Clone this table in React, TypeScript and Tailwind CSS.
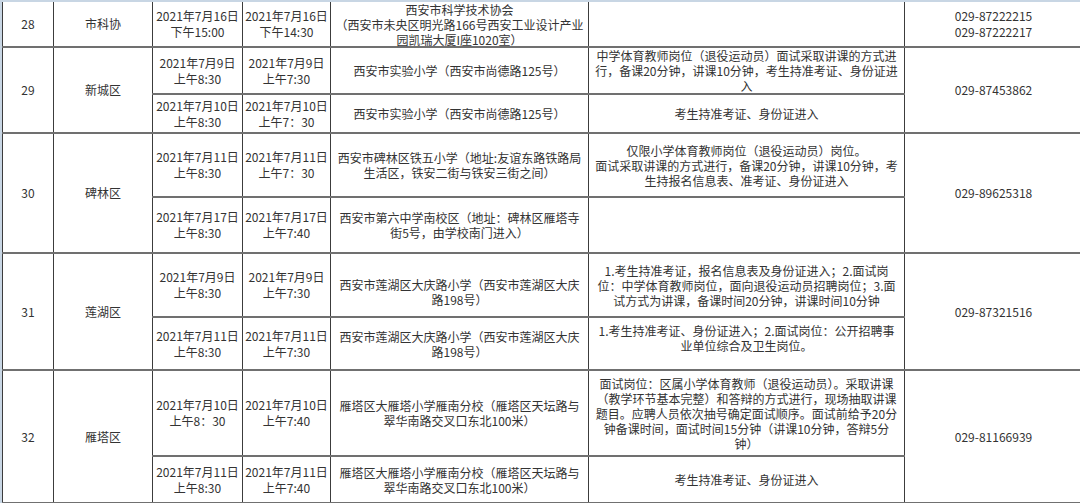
import React from "react";

type L = string[];

const B = "border-x border-x-[#3c3c3c] border-y-2 border-y-[#707070] p-0 text-center align-middle";

function Lines({ lines, lh = "leading-[15px]" }: { lines: L; lh?: string }) {
  return (
    <div className={lh}>
      {lines.map((l, i) => (
        <div key={i} className="whitespace-nowrap">
          {l || "\u00a0"}
        </div>
      ))}
    </div>
  );
}

function Fixed({ h, children }: { h: string; children: React.ReactNode }) {
  return <div className={h + " flex flex-col justify-center items-center overflow-visible"}>{children}</div>;
}

function DateCell({ d, t }: { d: string; t: string }) {
  return (
    <td className={B}>
      <Lines lines={[d, t]} lh="leading-[16px]" />
    </td>
  );
}

export default function App() {
  return (
    <div className="w-[1080px] h-[503px] overflow-hidden bg-white border-t-2 border-l-2 border-[#c8d6e4] font-['Noto_Sans_CJK_SC','Liberation_Sans',sans-serif] text-[12px] text-[#333]">
      <table className="table-fixed border-collapse w-[1080px] -mt-[2px]">
        <colgroup>
          <col className="w-[51px]" />
          <col className="w-[99px]" />
          <col className="w-[90px]" />
          <col className="w-[88px]" />
          <col className="w-[258px]" />
          <col className="w-[316px]" />
          <col className="w-[178px]" />
        </colgroup>
        <tbody>
          {/* 28 */}
          <tr className="h-[46px]">
            <td className={B + " border-t-0"}>28</td>
            <td className={B + " border-t-0"}>市科协</td>
            <DateCell d="2021年7月16日" t="下午15:00" />
            <DateCell d="2021年7月16日" t="下午14:30" />
            <td className={B}>
              <Fixed h="h-[44px]">
                <Lines lines={["西安市科学技术协会", "（西安市未央区明光路166号西安工业设计产业", "园凯瑞大厦I座1020室）"]} />
              </Fixed>
            </td>
            <td className={B}></td>
            <td className={B}>
              <Lines lines={["029-87222215", "029-87222217"]} lh="leading-[16px]" />
            </td>
          </tr>
          {/* 29 */}
          <tr className="h-[47px]">
            <td className={B} rowSpan={2}>29</td>
            <td className={B} rowSpan={2}>新城区</td>
            <DateCell d="2021年7月9日" t="上午8:30" />
            <DateCell d="2021年7月9日" t="上午7:30" />
            <td className={B}>西安市实验小学（西安市尚德路125号）</td>
            <td className={B}>
              <Lines
                lines={[
                  "中学体育教师岗位（退役运动员）面试采取讲课的方式进",
                  "行，备课20分钟，讲课10分钟，考生持准考证、身份证进",
                  "入",
                ]}
              />
            </td>
            <td className={B} rowSpan={2}>029-87453862</td>
          </tr>
          <tr className="h-[39px]">
            <DateCell d="2021年7月10日" t="上午8:30" />
            <DateCell d="2021年7月10日" t="上午7：30" />
            <td className={B}>西安市实验小学（西安市尚德路125号）</td>
            <td className={B}>考生持准考证、身份证进入</td>
          </tr>
          {/* 30 */}
          <tr className="h-[64px]">
            <td className={B} rowSpan={2}>30</td>
            <td className={B} rowSpan={2}>碑林区</td>
            <DateCell d="2021年7月11日" t="上午8:30" />
            <DateCell d="2021年7月11日" t="上午7：30" />
            <td className={B}>
              <Lines lines={["西安市碑林区铁五小学（地址:友谊东路铁路局", "生活区，铁安二街与铁安三街之间）"]} />
            </td>
            <td className={B}>
              <Lines
                lines={[
                  "仅限小学体育教师岗位（退役运动员）岗位。",
                  "面试采取讲课的方式进行，备课20分钟，讲课10分钟，考",
                  "生持报名信息表、准考证、身份证进入",
                ]}
              />
            </td>
            <td className={B} rowSpan={2}>029-89625318</td>
          </tr>
          <tr className="h-[56px]">
            <DateCell d="2021年7月17日" t="上午8:30" />
            <DateCell d="2021年7月17日" t="上午7:40" />
            <td className={B}>
              <Lines lines={["西安市第六中学南校区（地址：碑林区雁塔寺", "街5号，由学校南门进入）"]} />
            </td>
            <td className={B}></td>
          </tr>
          {/* 31 */}
          <tr className="h-[64px]">
            <td className={B} rowSpan={2}>31</td>
            <td className={B} rowSpan={2}>莲湖区</td>
            <DateCell d="2021年7月9日" t="上午8:30" />
            <DateCell d="2021年7月9日" t="上午7:30" />
            <td className={B}>
              <div className="pt-[14px]">
                <Lines lines={["西安市莲湖区大庆路小学（西安市莲湖区大庆", "路198号）"]} />
              </div>
            </td>
            <td className={B}>
              <Lines
                lines={[
                  "1.考生持准考证，报名信息表及身份证进入；2.面试岗",
                  "位：中学体育教师岗位，面向退役运动员招聘岗位；3.面",
                  "试方式为讲课，备课时间20分钟，讲课时间10分钟",
                ]}
              />
            </td>
            <td className={B} rowSpan={2}>029-87321516</td>
          </tr>
          <tr className="h-[53px]">
            <DateCell d="2021年7月11日" t="上午8:30" />
            <DateCell d="2021年7月11日" t="上午7:30" />
            <td className={B}>
              <Lines lines={["西安市莲湖区大庆路小学（西安市莲湖区大庆", "路198号）"]} />
            </td>
            <td className={B}>
              <div className="pb-[12px]">
                <Lines lines={["1.考生持准考证、身份证进入；2.面试岗位：公开招聘事", "业单位综合及卫生岗位。"]} />
              </div>
            </td>
          </tr>
          {/* 32 */}
          <tr className="h-[86px]">
            <td className={B} rowSpan={2}>32</td>
            <td className={B} rowSpan={2}>雁塔区</td>
            <DateCell d="2021年7月10日" t="上午8：30" />
            <DateCell d="2021年7月10日" t="上午7:40" />
            <td className={B}>
              <Lines lines={["雁塔区大雁塔小学雁南分校（雁塔区天坛路与", "翠华南路交叉口东北100米）"]} />
            </td>
            <td className={B}>
              <Lines
                lines={[
                  "面试岗位：区属小学体育教师（退役运动员）。采取讲课",
                  "（教学环节基本完整）和答辩的方式进行，现场抽取讲课",
                  "题目。应聘人员依次抽号确定面试顺序。面试前给予20分",
                  "钟备课时间，面试时间15分钟（讲课10分钟，答辩5分",
                  "钟）",
                ]}
              />
            </td>
            <td className={B} rowSpan={2}>029-81166939</td>
          </tr>
          <tr className="h-[47px]">
            <DateCell d="2021年7月11日" t="上午8:30" />
            <DateCell d="2021年7月11日" t="上午7:40" />
            <td className={B}>
              <Lines lines={["雁塔区大雁塔小学雁南分校（雁塔区天坛路与", "翠华南路交叉口东北100米）"]} />
            </td>
            <td className={B}>考生持准考证、身份证进入</td>
          </tr>
          <tr className="h-[20px]">
            <td className={B}></td>
            <td className={B}></td>
            <td className={B}></td>
            <td className={B}></td>
            <td className={B}></td>
            <td className={B}></td>
            <td className={B}></td>
          </tr>
        </tbody>
      </table>
    </div>
  );
}
